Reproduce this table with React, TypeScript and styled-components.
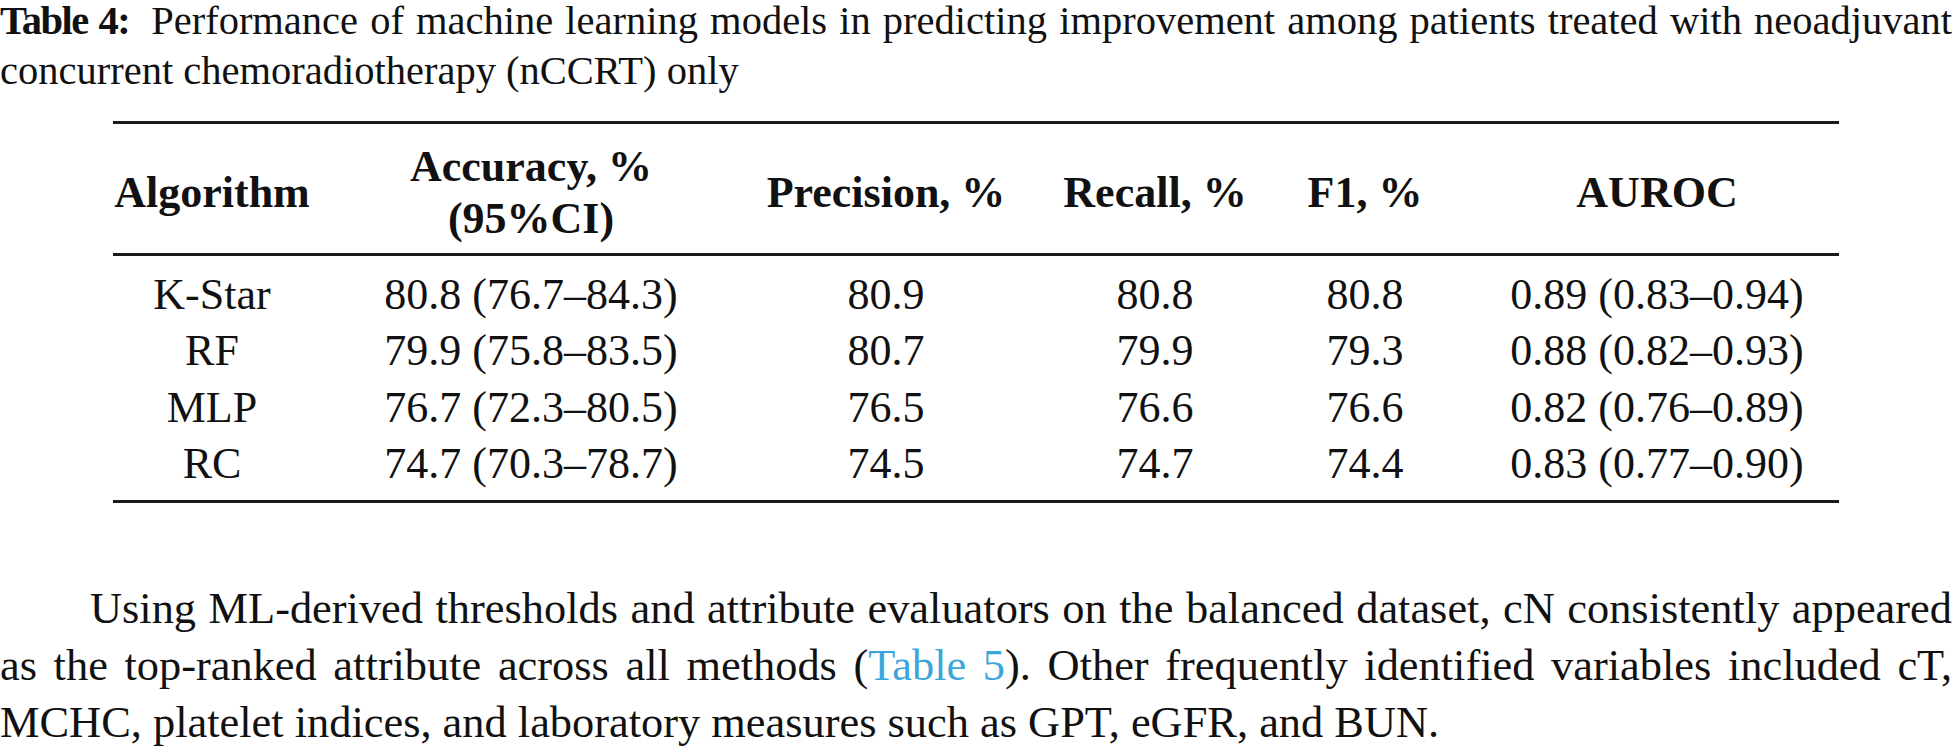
import styled, { createGlobalStyle } from 'styled-components';

const GlobalStyle = createGlobalStyle`
    html, body {
        margin: 0;
        padding: 0;
        background: #fff;
    }
    body {
        font-family: "Liberation Serif", "Times New Roman", serif;
        color: #111;
    }
`;

const Page = styled.main`
    width: 1952px;
    display: flex;
    flex-direction: column;
`;

const Caption = styled.p`
    margin: -4px 0 0;
    font-size: 40.5px;
    line-height: 50px;
    text-align: justify;
`;

const CaptionLabel = styled.b`
    font-weight: 700;
    letter-spacing: -1.5px;
    margin-right: 22px;
`;

// Table.

const Table = styled.div`
    margin: 25px 0 0 113px;
    width: 1726px;
    font-size: 44px;
`;

const cols = '198px 440px 270px 268px 152px 398px';

const HeaderRow = styled.div`
    display: grid;
    grid-template-columns: ${cols};
    align-items: center;
    height: 129px;
    border-top: 3px solid #1a1a1a;
    border-bottom: 3px solid #1a1a1a;
`;

const HeadCell = styled.div<{ $last?: boolean }>`
    font-weight: 700;
    text-align: center;
    white-space: nowrap;
    line-height: 52px;
    padding-top: 8px;
    padding-left: ${(p) => (p.$last ? '34px' : '0')};
`;

const Body = styled.div`
    padding: 11px 0 7px;
    border-bottom: 3px solid #1a1a1a;
`;

const Row = styled.div`
    display: grid;
    grid-template-columns: ${cols};
    line-height: 56.4px;
    height: 56.4px;
`;

const Cell = styled.div<{ $last?: boolean }>`
    text-align: center;
    white-space: nowrap;
    padding-left: ${(p) => (p.$last ? '34px' : '0')};
`;

// Paragraph.

const Paragraph = styled.p`
    margin: 77px 0 0;
    font-size: 44.4px;
    line-height: 57px;
    text-align: justify;
    text-indent: 90px;
`;

const Ref = styled.a`
    color: #3aa6dc;
    text-decoration: none;
`;

const rows = [
    ['K-Star', '80.8 (76.7–84.3)', '80.9', '80.8', '80.8', '0.89 (0.83–0.94)'],
    ['RF', '79.9 (75.8–83.5)', '80.7', '79.9', '79.3', '0.88 (0.82–0.93)'],
    ['MLP', '76.7 (72.3–80.5)', '76.5', '76.6', '76.6', '0.82 (0.76–0.89)'],
    ['RC', '74.7 (70.3–78.7)', '74.5', '74.7', '74.4', '0.83 (0.77–0.90)'],
];

const App = () => {
    return (
        <Page>
            <GlobalStyle />
            <Caption>
                <CaptionLabel>Table 4:</CaptionLabel>
                Performance of machine learning models in predicting improvement among patients treated with neoadjuvant concurrent chemoradiotherapy (nCCRT) only
            </Caption>

            <Table>
                <HeaderRow>
                    <HeadCell>Algorithm</HeadCell>
                    <HeadCell>Accuracy, %<br />(95%CI)</HeadCell>
                    <HeadCell>Precision, %</HeadCell>
                    <HeadCell>Recall, %</HeadCell>
                    <HeadCell>F1, %</HeadCell>
                    <HeadCell $last>AUROC</HeadCell>
                </HeaderRow>
                <Body>
                    {rows.map((r) => (
                        <Row key={r[0]}>
                            {r.map((v, i) => (
                                <Cell key={i} $last={i === 5}>{v}</Cell>
                            ))}
                        </Row>
                    ))}
                </Body>
            </Table>

            <Paragraph>
                Using ML-derived thresholds and attribute evaluators on the balanced dataset, cN consistently appeared as the top-ranked attribute across all methods (<Ref href="#table5">Table 5</Ref>). Other frequently identified variables included cT, MCHC, platelet indices, and laboratory measures such as GPT, eGFR, and BUN.
            </Paragraph>
        </Page>
    );
};

export default App;
